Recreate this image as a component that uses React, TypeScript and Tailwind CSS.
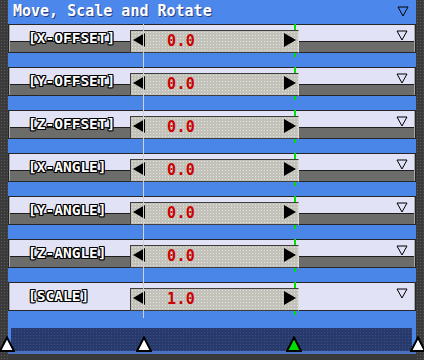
const mono = "font-['DejaVu_Sans_Mono','Liberation_Mono',monospace]";

const rows = [
  { label: "[X-OFFSET]", value: "0.0" },
  { label: "[Y-OFFSET]", value: "0.0" },
  { label: "[Z-OFFSET]", value: "0.0" },
  { label: "[X-ANGLE]", value: "0.0" },
  { label: "[Y-ANGLE]", value: "0.0" },
  { label: "[Z-ANGLE]", value: "0.0" },
  { label: "[SCALE]", value: "1.0", full: true },
];

function DownCaret() {
  return (
    <svg width="12" height="11" viewBox="0 0 12 11">
      <polygon points="1,1 11,1 6,10" fill="none" stroke="#000" strokeWidth="1" />
    </svg>
  );
}

function Marker({ fill }: { fill: string }) {
  return (
    <svg width="16" height="16" viewBox="0 0 16 16">
      <polygon points="8,1.5 15,15 1,15" fill={fill} stroke="#000" strokeWidth="2" strokeLinejoin="miter" />
    </svg>
  );
}

function Row({ label, value, full }: { label: string; value: string; full?: boolean }) {
  const bands = full
    ? "bg-[#e2e2f6]"
    : "bg-[linear-gradient(to_bottom,#e2e2f6_16px,#1e1e1e_16px,#1e1e1e_17px,#6c6c6a_17px)]";
  return (
    <div className="border border-[#262626]">
      <div className={`relative h-[27px] flex items-start border-l border-r border-[#a6a6a6] ${bands}`}>
        {/* marcador verde detrás de la caja */}
        <div className="absolute left-[284px] -top-px h-[33px] w-[2px] bg-[#00e000]" />

        <div className="w-[120px] pl-[18px] pt-0 h-full">
          <span
            className={`${mono} text-[14.5px] leading-[15px] font-bold text-white [text-shadow:1px_0_#000,-1px_0_#000,0_1px_#000,0_-1px_#000,1px_1px_#000,-1px_-1px_#000,1px_-1px_#000,-1px_1px_#000]`}
          >
            {label}
          </span>
        </div>

        <div className="relative mt-[5px] h-[23px] w-[169px] flex items-center border-l border-t border-b border-[#3e3e3e] border-r border-r-[#dcdcd4] bg-[#c2c2ba] bg-[radial-gradient(circle,#e4e4dc_0.7px,transparent_0.8px)] bg-size-[3px_3px]">
          <svg width="12" height="14" viewBox="0 0 12 14" className="ml-[2px] -mt-[3px]">
            <polygon points="0,7 12,0 12,14" fill="#000" />
          </svg>
          <span className={`${mono} ml-[22px] -mt-[1px] text-[15px] leading-none font-bold text-[#cc0000] tracking-[0.4px]`}>
            {value}
          </span>
          <div className="flex-1" />
          <svg width="12" height="14" viewBox="0 0 12 14" className="mr-[2px] -mt-[3px]">
            <polygon points="0,0 12,7 0,14" fill="#000" />
          </svg>
        </div>

        <div className="flex-1 flex justify-end pr-[6px] pt-[5px]">
          <DownCaret />
        </div>
      </div>
    </div>
  );
}

export default function App() {
  return (
    <div className="relative w-[424px] h-[360px] flex bg-[#3a3a3a] overflow-hidden">
      {/* borde izquierdo */}
      <div className="w-[8px] h-full bg-[#3b3b3b] bg-[radial-gradient(circle,#555_0.7px,transparent_0.8px)] bg-size-[3px_3px]" />

      <div className="relative w-[408px] h-full flex flex-col bg-[#4a86e8]">
        {/* barra de título */}
        <div className="h-[24px] flex items-start justify-between pl-[5px] pr-[7px] bg-[#4c88ec]">
          <span
            className={`${mono} mt-[3px] text-[15px] leading-[16px] font-bold text-white [text-shadow:1px_1px_#2a3f80]`}
          >
            Move, Scale and Rotate
          </span>
          <div className="mt-[6px]">
            <DownCaret />
          </div>
        </div>

        <div className="flex flex-col gap-[14px]">
          {rows.map((r) => (
            <Row key={r.label} label={r.label} value={r.value} full={r.full} />
          ))}
        </div>

        <div className="mt-[17px] ml-[3px] mr-[4px] h-[23px] bg-[#283a6c] bg-[radial-gradient(circle,#3a4f8a_0.7px,transparent_0.8px)] bg-size-[3px_3px]" />
        <div className="h-[3px] bg-[#4a72c0]" />
        <div className="flex-1 bg-[#3a3a3a]" />

        {/* línea blanca del marcador */}
        <div className="absolute left-[135px] top-[24px] h-[294px] w-px bg-[#d2d2d2]" />
      </div>

      {/* borde derecho */}
      <div className="w-[8px] h-full bg-[#3b3b3b] bg-[radial-gradient(circle,#555_0.7px,transparent_0.8px)] bg-size-[3px_3px]" />

      {/* marcadores inferiores */}
      <div className="absolute left-[-1px] top-[336px]"><Marker fill="#fff" /></div>
      <div className="absolute left-[136px] top-[336px]"><Marker fill="#fff" /></div>
      <div className="absolute left-[286px] top-[336px]"><Marker fill="#00e000" /></div>
      <div className="absolute left-[410px] top-[336px]"><Marker fill="#fff" /></div>
    </div>
  );
}
